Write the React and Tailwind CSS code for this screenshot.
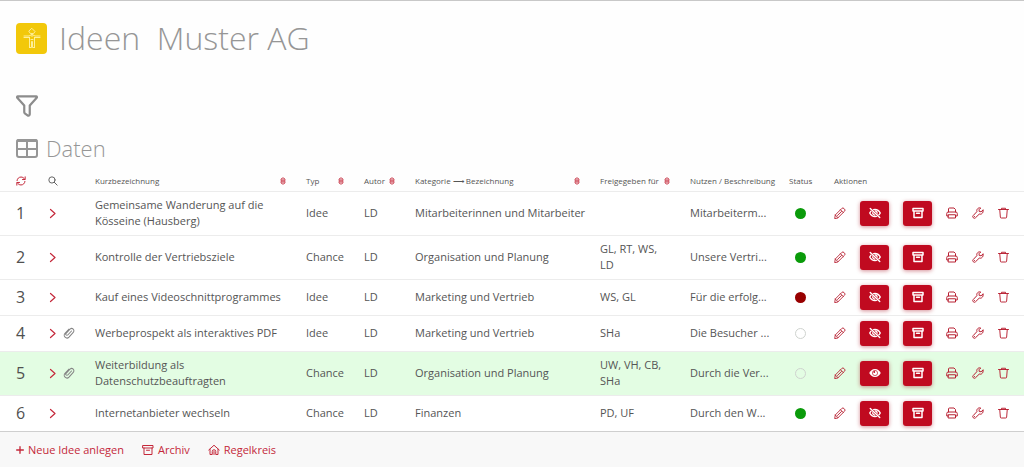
import React from "react";

function Svg({ className, box = "0 0 24 24", width = 1.8, children }) {
  return (
    <svg
      viewBox={box}
      className={className}
      fill="none"
      stroke="currentColor"
      strokeWidth={width}
      strokeLinecap="round"
      strokeLinejoin="round"
      aria-hidden="true"
    >
      {children}
    </svg>
  );
}

const Pencil = () => (
  <Svg className="size-3" width={1.8}>
    <path d="M1.500 22.500l1-6.500L15.500 3a3.200 3.200 0 0 1 4.500 0l1 1a3.200 3.200 0 0 1 0 4.500L8 21.500z" />
    <path d="M13 5.500l5.500 5.500M2.500 16l5.500 5.500M7 17L15 9" />
  </Svg>
);

const Printer = () => (
  <Svg className="size-3" width={2}>
    <path d="M5 10V4a2 2 0 0 1 2-2h9l3 3v5" />
    <path d="M5 18H1.500v-5a3 3 0 0 1 3-3h15a3 3 0 0 1 3 3v5H19" />
    <path d="M5 15.500h14V22H5z" />
  </Svg>
);

const Wrench = () => (
  <Svg className="size-3" width={2}>
    <path d="M22 6.500l-4 3-3.500-.500L14 5.500l3.500-3.500c-3-1-6 .3-7.300 2.800-.8 1.500-.8 3-.4 4.500L2.500 17a3 3 0 0 0 4.500 4.500l7.500-7.300c1.700.5 3.400.3 5-.7 2.300-1.500 3.200-4.300 2.500-7z" />
    <path d="M5 19h.1" />
  </Svg>
);

const Trash = () => (
  <Svg className="size-3" width={1.9}>
    <path d="M1 5h20M7 5V2.500h8V5M3.500 5l1.200 15a2 2 0 0 0 2 2h8.600a2 2 0 0 0 2-2L18.500 5" />
  </Svg>
);

const Archive = ({ className, width = 3 }) => (
  <Svg className={className} width={width}>
    <path d="M2 3h20v5H2zM4 8v13h16V8M9 12.500h6" />
  </Svg>
);

const Eye = () => (
  <svg viewBox="0 0 24 24" className="h-3 w-3.5" aria-hidden="true">
    <path fill="currentColor" d="M12 4C6.500 4 2.500 7.500.5 12c2 4.500 6 8 11.500 8s9.500-3.500 11.500-8C21.500 7.500 17.500 4 12 4z" />
    <circle cx="12" cy="12" r="5.200" fill="none" stroke="#c00a20" strokeWidth="1.300" />
    <circle cx="10.500" cy="10" r="1.800" fill="#c00a20" />
  </svg>
);

const EyeOff = () => (
  <Svg className="h-3 w-3.5" width={2.8}>
    <path d="M1.500 12C3.500 8 7 5 12 5s8.500 3 10.500 7c-2 4-5.500 7-10.500 7S3.500 16 1.500 12z" />
    <path d="M7.500 11a4.500 4.500 0 0 0 4 5M12.500 8a4.500 4.500 0 0 1 3.500 5" />
    <path d="M3 3.500l18 17" stroke="#c00a20" strokeWidth="4.500" />
    <path d="M2.500 3l19 18" />
  </Svg>
);

const Chevron = () => (
  <Svg className="h-[11px] w-2" box="0 0 16 22" width={2.4}>
    <path d="M3 3l9 8-9 8" />
  </Svg>
);

const Clip = () => (
  <Svg className="size-3 text-[#858585]" width={2.1}>
    <path d="M17 8l-7.500 8a2.300 2.300 0 0 1-3.300-3.300L14 4.500a4.500 4.500 0 0 1 6.500 6.300L12 20.300a5.500 5.500 0 0 1-8-7.700L12 4.300" />
  </Svg>
);

const Sort = () => (
  <Svg className="h-2 w-1.5 shrink-0 text-[#c4283a]" box="0 0 18 24" width={2.2}>
    <path d="M3 10V6l6-4 6 4v4zM3 14v4l6 4 6-4v-4zM5 6.500h8M5 17.500h8" />
  </Svg>
);

const Refresh = () => (
  <Svg className="size-2.5" width={2.4}>
    <path d="M2.500 11C3 6 7 2.500 12 2.500c4 0 7 2 9 5.500M22 2v6.500h-6.500M21.500 13c-.5 5-4.500 8.500-9.500 8.500-4 0-7-2-9-5.500M2 22v-6.500h6.500" />
  </Svg>
);

const SearchIcon = () => (
  <Svg className="size-2.5 text-[#666]" width={2.4}>
    <circle cx="9.500" cy="9.500" r="7.500" />
    <path d="M15 15l7 7" />
  </Svg>
);

const LogoFigure = () => (
  <Svg className="h-[22px] w-[18px] text-[#fff3a8]" box="0 0 18 22" width={0.9}>
    <path d="M9 1.500l3 3-1.500 2.200h-3L6 4.500zM9 6.500v3M1 9h5l3-1.500L12 9h5M1 10.500h5.500M11.500 10.500H17M6.500 10.500v10M11.500 10.500v10M6.500 20.500h2v-6h1v6h2M8 12.500h2" />
  </Svg>
);

const Dot = ({ status }) => {
  const look = {
    green: "bg-[#0a9b0a]",
    red: "bg-[#980000]",
    none: "border border-[#cfd3cf]",
  };
  const label = { green: "Grün", red: "Rot", none: "Offen" };
  return (
    <span
      role="img"
      aria-label={label[status]}
      className={`block size-[11px] rounded-full ${look[status]}`}
    />
  );
};

const columns = [
  { label: "Kurzbezeichnung", width: "w-[211px]", sort: true },
  { label: "Typ", width: "w-[58px]", sort: true },
  { label: "Autor", width: "w-[51px]", sort: true },
  { label: "Kategorie ⟶ Bezeichnung", width: "w-[185px]", sort: true },
  { label: "Freigegeben für", width: "w-[90px]", sort: true },
  { label: "Nutzen / Beschreibung", width: "w-[99px]" },
  { label: "Status", width: "w-[45px]" },
  { label: "Aktionen", width: "w-[190px]" },
];

const ideas = [
  { name: "Gemeinsame Wanderung auf die Kösseine (Hausberg)", type: "Idee", category: "Mitarbeiterinnen und Mitarbeiter", shared: "", benefit: "Mitarbeiterm...", status: "green", tall: true },
  { name: "Kontrolle der Vertriebsziele", type: "Chance", category: "Organisation und Planung", shared: "GL, RT, WS, LD", benefit: "Unsere Vertri...", status: "green", tall: true },
  { name: "Kauf eines Videoschnittprogrammes", type: "Idee", category: "Marketing und Vertrieb", shared: "WS, GL", benefit: "Für die erfolg...", status: "red" },
  { name: "Werbeprospekt als interaktives PDF", type: "Idee", category: "Marketing und Vertrieb", shared: "SHa", benefit: "Die Besucher ...", status: "none", clip: true },
  { name: "Weiterbildung als Datenschutzbeauftragten", type: "Chance", category: "Organisation und Planung", shared: "UW, VH, CB, SHa", benefit: "Durch die Ver...", status: "none", clip: true, visible: true, tall: true },
  { name: "Internetanbieter wechseln", type: "Chance", category: "Finanzen", shared: "PD, UF", benefit: "Durch den W...", status: "green" },
];

const solid =
  "flex h-[25px] w-[29px] shrink-0 items-center justify-center rounded-[3px] bg-[#c00a20] text-white shadow-[0_1px_4px_rgba(160,0,20,0.45)]";

function Row({ idea, number }) {
  return (
    <tr
      className={`border-t border-[#ececec] ${idea.tall ? "h-11" : "h-9"} ${
        idea.visible ? "bg-[#e3fde3]" : "bg-white"
      }`}
    >
      <td className="pl-4 text-base text-[#505050]">{number}</td>
      <td>
        <div className="flex items-center gap-1.5 text-[#c4283a]">
          <button type="button" aria-label="Details anzeigen" className="pl-px"><Chevron /></button>
          {idea.clip && <Clip />}
        </div>
      </td>
      <td className="pr-5">{idea.name}</td>
      <td>{idea.type}</td>
      <td>LD</td>
      <td className="whitespace-nowrap">{idea.category}</td>
      <td className="pr-5">{idea.shared}</td>
      <td className="whitespace-nowrap">{idea.benefit}</td>
      <td className="pl-1.5"><Dot status={idea.status} /></td>
      <td>
        <div className="flex items-center gap-3.5 text-[#b82032]">
          <button type="button" aria-label="Bearbeiten"><Pencil /></button>
          <button type="button" aria-label="Sichtbarkeit" className={solid}>
            {idea.visible ? <Eye /> : <EyeOff />}
          </button>
          <button type="button" aria-label="Archivieren" className={solid}>
            <Archive className="size-3" />
          </button>
          <button type="button" aria-label="Drucken"><Printer /></button>
          <button type="button" aria-label="Einstellungen"><Wrench /></button>
          <button type="button" aria-label="Löschen"><Trash /></button>
        </div>
      </td>
    </tr>
  );
}

export default function App() {
  return (
    <div className="flex min-h-screen flex-col border-t border-[#c8c8c8] bg-[#fefefe] font-['Open_Sans','Noto_Sans',sans-serif] text-[11px] leading-4 text-[#555]">
      <header className="flex items-center gap-3 px-4 pt-[17px]">
        <span className="flex size-[31px] items-center justify-center rounded bg-[#f2c80a]">
          <LogoFigure />
        </span>
        <h1 className="text-[32px] leading-10 font-light whitespace-pre text-[#969696]">Ideen  Muster AG</h1>
      </header>

      <div className="px-4 pt-[37px]">
        <button type="button" aria-label="Filter" className="block text-[#8c8c8c]">
          <Svg className="size-[22px]" width={2.4}>
            <path d="M2 1.500h20a.8.8 0 0 1 .6 1.400L15 11.500V21a1.500 1.500 0 0 1-2.400 1.200l-3-2.200a1.500 1.500 0 0 1-.6-1.200v-7.300L1.400 2.900A.8.8 0 0 1 2 1.500z" />
          </Svg>
        </button>
      </div>

      <div className="flex items-center gap-2 px-4 pt-[17px] pb-[9px] text-[#969696]">
        <Svg className="h-[19px] w-[22px]" box="0 0 22 19" width={2}>
          <rect x="1" y="1" width="20" height="17" rx="2" />
          <path d="M1 10h20M11 1v17" />
          <path d="M2 1.500h18" strokeWidth="3" />
        </Svg>
        <h2 className="text-[22px] leading-7 font-light">Daten</h2>
      </div>

      <table className="w-full table-fixed border-collapse text-left">
        <thead>
          <tr className="h-5 text-[8px] leading-3 whitespace-nowrap">
            <th className="w-12 pl-4 font-normal">
              <button type="button" aria-label="Aktualisieren" className="block text-[#c4283a]"><Refresh /></button>
            </th>
            <th className="w-[47px] font-normal">
              <button type="button" aria-label="Suchen" className="block"><SearchIcon /></button>
            </th>
            {columns.map((c) => (
              <th key={c.label} className={`${c.width} font-normal`}>
                {c.sort ? (
                  <button type="button" className="flex w-full items-center justify-between pr-5">
                    {c.label}
                    <Sort />
                  </button>
                ) : (
                  c.label
                )}
              </th>
            ))}
          </tr>
        </thead>
        <tbody>
          {ideas.map((idea, i) => (
            <Row key={idea.name} idea={idea} number={i + 1} />
          ))}
        </tbody>
      </table>

      <footer className="flex flex-1 items-center gap-[18px] border-t border-[#cfcfcf] bg-[#f8f8f8] px-4 text-[#c4283a]">
        <a href="#neu" className="flex items-center gap-1">
          <Svg className="size-2" width={4}>
            <path d="M12 2v20M2 12h20" />
          </Svg>
          Neue Idee anlegen
        </a>
        <a href="#archiv" className="flex items-center gap-1">
          <Archive className="size-3" width={2} />
          Archiv
        </a>
        <a href="#regelkreis" className="flex items-center gap-1">
          <Svg className="size-3" width={2}>
            <path d="M1.500 12L12 2.500 22.500 12M4 10.500V21h4.500v-6a3.500 3.500 0 0 1 7 0v6H20V10.500M12 15v6" />
          </Svg>
          Regelkreis
        </a>
      </footer>
    </div>
  );
}
